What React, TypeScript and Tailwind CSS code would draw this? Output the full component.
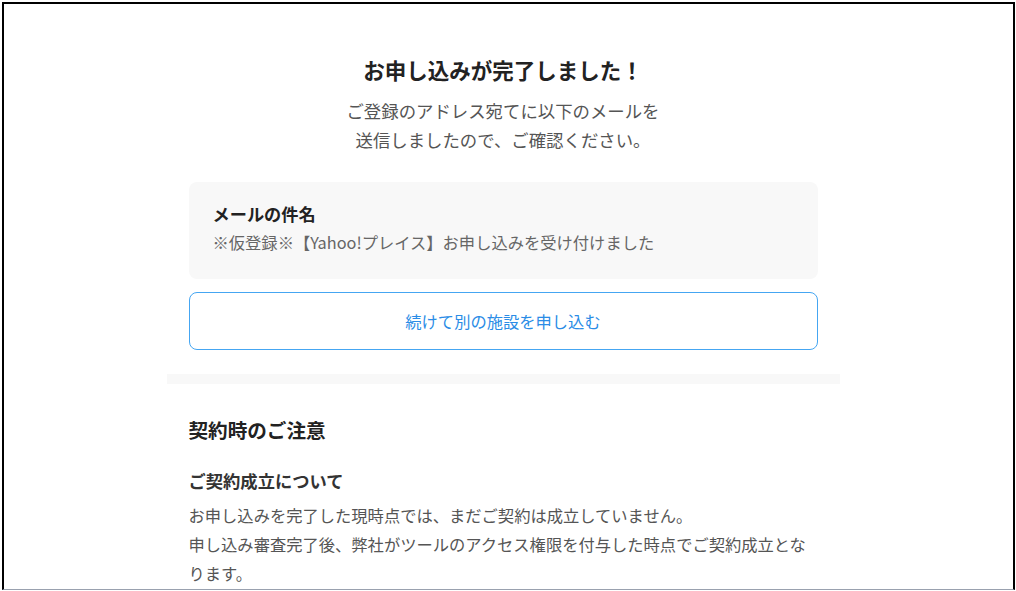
export default function App() {
  return (
    <div className="h-[591px] w-[1016px] overflow-hidden bg-white pl-[2px] pt-[2px] font-['Noto_Sans_CJK_JP','Noto_Sans',sans-serif]">
      <div className="h-[588px] w-[1013px] overflow-hidden border-t-2 border-l-2 border-r-2 border-b border-black border-b-gray-400 bg-white pr-[11px]">
        <div className="mx-auto w-[673px] pt-[51px]">
          {/* 完了メッセージ */}
          <h1 className="text-center text-[21.5px] font-bold leading-[30px] text-[#222]">
            お申し込みが完了しました！
          </h1>
          <p className="mt-[11px] text-center text-[17.4px] leading-[29px] text-[#555]">
            ご登録のアドレス宛てに以下のメールを
            <br />
            送信しましたので、ご確認ください。
          </p>

          <div className="px-[22px]">
            {/* メール件名 */}
            <div className="mt-[28px] rounded-lg bg-[#f8f8f8] px-6 pt-[19px] pb-[24px]">
              <p className="text-[17.2px] font-bold leading-[26px] text-[#222]">メールの件名</p>
              <p className="mt-[2px] text-[16.3px] leading-[26px] text-[#666]">
                ※仮登録※【Yahoo!プレイス】お申し込みを受け付けました
              </p>
            </div>

            <button className="mt-[13px] flex h-[58px] w-full items-center justify-center rounded-lg border border-[#45a6f2] bg-white text-[16.3px] text-[#2a8ce6]">
              続けて別の施設を申し込む
            </button>
          </div>

          <div className="mt-[24px] h-[10px] bg-[#f8f8f8]" />

          {/* 契約時のご注意 */}
          <div className="px-[22px]">
            <h2 className="mt-[32px] text-[19.6px] font-bold leading-[28px] text-[#222]">契約時のご注意</h2>
            <h3 className="mt-[24px] text-[17.3px] font-bold leading-[26px] text-[#333]">ご契約成立について</h3>
            <p className="mt-[7px] text-[16.3px] leading-[29px] text-[#555]">
              お申し込みを完了した現時点では、まだご契約は成立していません。
              <br />
              申し込み審査完了後、弊社がツールのアクセス権限を付与した時点でご契約成立となります。
            </p>
          </div>
        </div>
      </div>
    </div>
  );
}
